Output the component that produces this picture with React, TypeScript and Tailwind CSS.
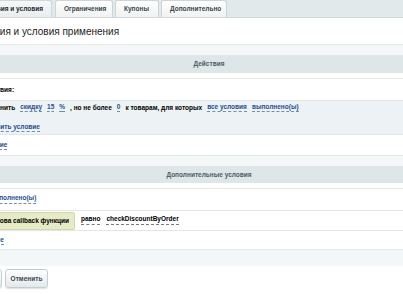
const font = "font-['Liberation_Sans',Arial,sans-serif]";

function Tab({ label, active, className = "" }: { label: string; active?: boolean; className?: string }) {
  return (
    <div
      className={`flex h-[17px] items-center whitespace-nowrap rounded-t-[3px] border border-b-0 px-[8px] text-[6.5px] font-bold ${
        active
          ? "border-[#cfd7da] bg-gradient-to-b from-[#f7f8f8] to-[#e9eded] text-[#1d2a30]"
          : "border-[#cdd5d8] bg-gradient-to-b from-white to-[#eff2f3] text-[#3a474d]"
      } ${className}`}
    >
      {label}
    </div>
  );
}

function Val({ children, dark }: { children: React.ReactNode; dark?: boolean }) {
  return (
    <span
      className={`border-b border-dashed pb-[1px] leading-none ${
        dark ? "border-[#7a7a7a] text-black" : "border-[#6c8dba] text-[#28508e]"
      }`}
    >
      {children}
    </span>
  );
}

export default function App() {
  return (
    <div className={`h-[294px] w-[403px] overflow-hidden bg-white ${font}`}>
      {/* tabs */}
      <div className="flex h-[18px] items-end gap-[2px] border-b border-[#d3dbde] bg-[#e2e9eb]">
        <Tab label="Действия и условия" active className="-ml-[26px] w-[78px] justify-end" />
        <Tab label="Ограничения" className="ml-[1px] w-[58px]" />
        <Tab label="Купоны" className="w-[44px]" />
        <Tab label="Дополнительно" className="w-[66px]" />
      </div>

      {/* title */}
      <div className="flex h-[26px] items-center whitespace-nowrap">
        <span className="-ml-[33px] text-[10px] text-[#1c1c1c]">Действия и условия применения</span>
      </div>
      <div className="h-[11px] border-t border-[#e6ebed] bg-[#f4f7f8]" />

      {/* actions */}
      <div className="flex h-[18px] items-center justify-center bg-[#dfe6e8] pl-[15px] text-[6.5px] font-bold text-[#4b5e64]">
        Действия
      </div>
      <div className="h-[5px]" />
      <div className="flex h-[22px] items-center whitespace-nowrap border-t border-[#e4e9eb] text-[6.5px] font-bold text-black">
        <span className="-ml-[19px]">Действия:</span>
      </div>
      <div className="flex h-[34px] flex-col justify-center gap-[9px] border-t border-[#e1e7e9] bg-[#edf2f4] text-[6.5px] font-bold text-black">
        <div className="flex items-center gap-[5px] whitespace-nowrap">
          <span className="-ml-[21px]">Применить</span>
          <Val>скидку</Val>
          <Val>15</Val>
          <Val>%</Val>
          <span>, но не более</span>
          <Val>0</Val>
          <span>к товарам, для которых</span>
          <Val>все условия</Val>
          <Val>выполнено(ы)</Val>
        </div>
        <div className="flex whitespace-nowrap">
          <span className="-ml-[20px]">
            <Val>Добавить условие</Val>
          </span>
        </div>
      </div>
      <div className="flex h-[21px] items-center whitespace-nowrap border-t border-[#e1e7e9] text-[6.5px] font-bold">
        <span className="-ml-[56px]">
          <Val>Добавить действие</Val>
        </span>
      </div>

      {/* extra conditions */}
      <div className="h-[11px] border-t border-[#e4e9eb] bg-[#f4f7f8]" />
      <div className="flex h-[17px] items-center justify-center bg-[#dfe6e8] pl-[15px] text-[6.5px] font-bold text-[#4b5e64]">
        Дополнительные условия
      </div>
      <div className="h-[5px]" />
      <div className="flex h-[22px] items-center gap-[6px] whitespace-nowrap border-t border-[#e4e9eb] text-[6.5px] font-bold">
        <span className="-ml-[56px] flex gap-[5px]">
          <Val>Все условия</Val>
          <Val>выполнено(ы)</Val>
        </span>
      </div>
      <div className="flex h-[20px] items-center gap-[6px] whitespace-nowrap border-t border-[#e1e7e9] text-[6.5px] font-bold text-black">
        <span className="-ml-[50px] flex h-[18px] items-center rounded-[2px] border border-[#d3d8aa] bg-[#e7eac6] pl-[4px] pr-[5px]">
          Значение вызова callback функции
        </span>
        <Val dark>равно</Val>
        <Val dark>checkDiscountByOrder</Val>
      </div>
      <div className="flex h-[19px] items-center whitespace-nowrap border-t border-[#e1e7e9] text-[6.5px] font-bold">
        <span className="-ml-[56px]">
          <Val>Добавить условие</Val>
        </span>
      </div>
      <div className="h-[17px] border-t border-[#e4e9eb] bg-[#f4f7f8]" />

      {/* buttons */}
      <div className="mt-[3px] flex gap-[3px] whitespace-nowrap text-[6.5px] font-bold text-[#3c4850]">
        <button className="-ml-[40px] h-[19px] w-[42px] rounded-[3px] border border-[#c4cdd1] bg-gradient-to-b from-white to-[#e3e9eb] shadow-[0_1px_1px_rgba(0,0,0,0.12)]">
          Применить
        </button>
        <button className="h-[19px] w-[43px] rounded-[3px] border border-[#c4cdd1] bg-gradient-to-b from-white to-[#e3e9eb] shadow-[0_1px_1px_rgba(0,0,0,0.12)]">
          Отменить
        </button>
      </div>
    </div>
  );
}
